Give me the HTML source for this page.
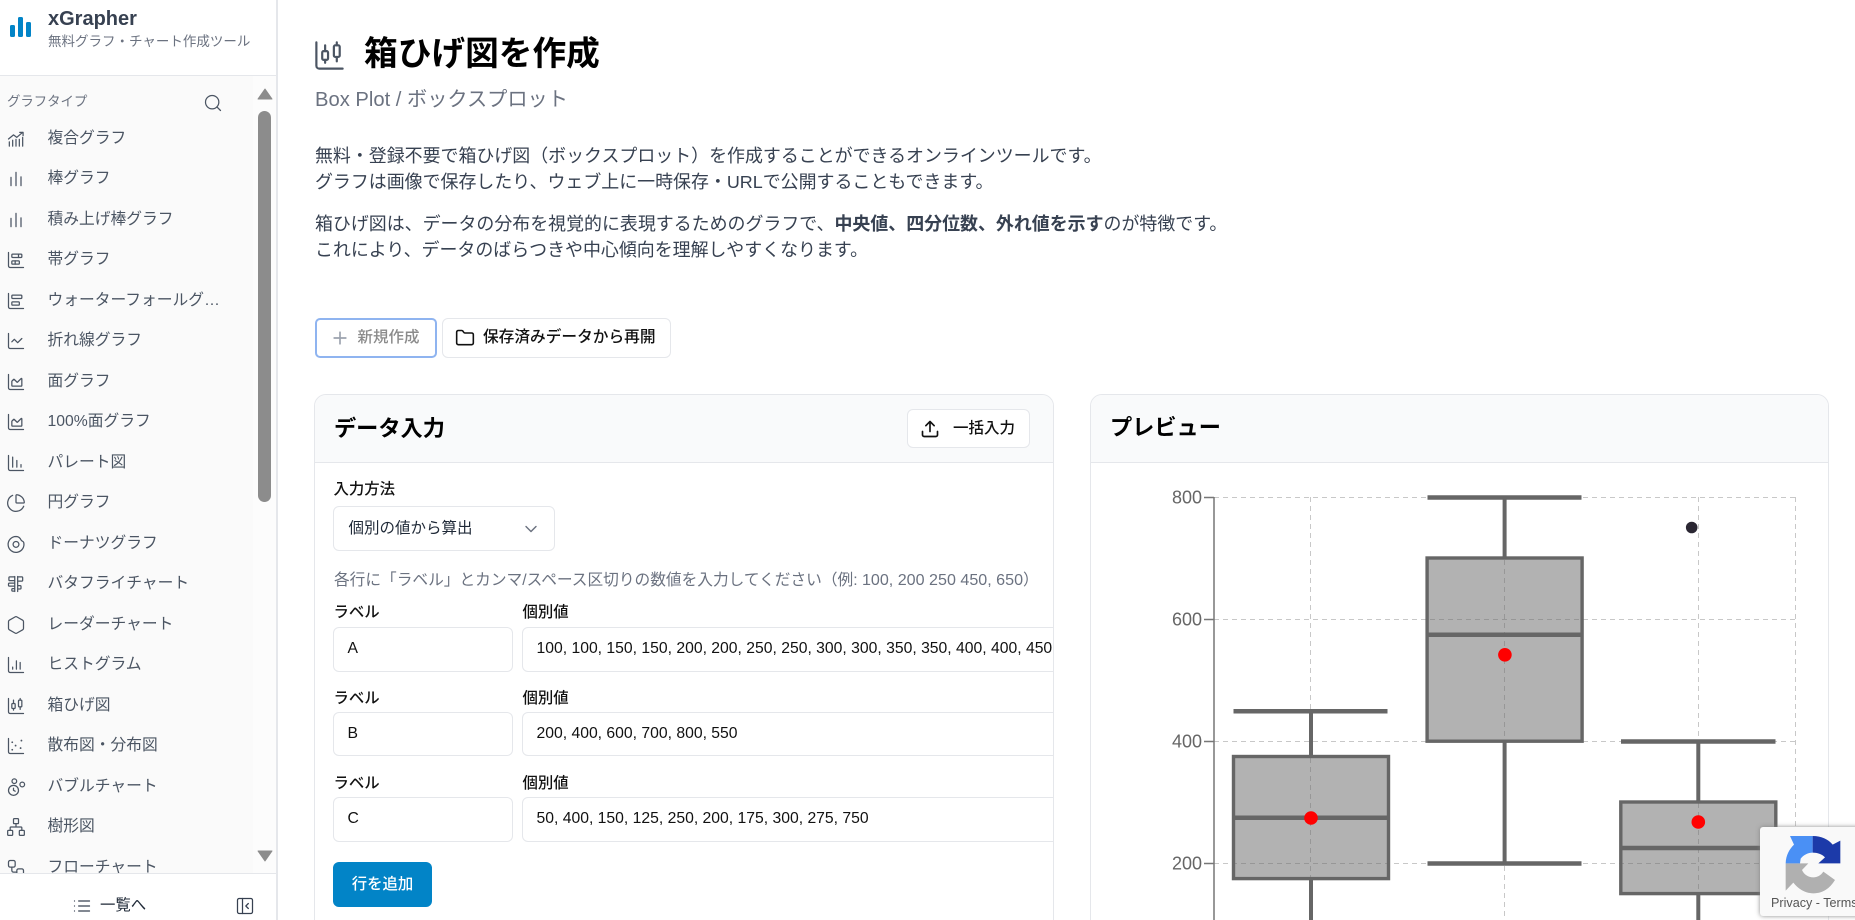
<!DOCTYPE html>
<html lang="ja"><head><meta charset="utf-8"><title>箱ひげ図を作成</title>
<style>
html,body{margin:0;padding:0;width:1855px;height:920px;overflow:hidden;background:#fff}
body{position:relative;font-family:"Liberation Sans","Noto Sans CJK JP",sans-serif;color:#111}
.a{position:absolute;box-sizing:border-box}
.t{position:absolute;white-space:nowrap;line-height:20px;height:20px}
svg{display:block;position:absolute;fill:none;stroke:currentColor;stroke-linecap:round;stroke-linejoin:round}
.side{left:0;top:0;width:278px;height:920px;background:#fafafa;border-right:2px solid #e5e7eb;overflow:hidden}
.list{position:absolute;left:0;top:116.75px;width:253px;height:757px;overflow:hidden}
.it{position:relative;height:40.5px;line-height:40.5px;font-size:15.75px;color:#4b5563;padding-left:47.5px;white-space:nowrap}
.it svg{left:6px;top:12px;color:#4b5563;stroke-width:1.5}
.it span{display:block;position:relative;top:2.2px;width:174px;overflow:hidden;text-overflow:ellipsis}
.card{border:1px solid #e5e7eb;border-radius:12px;overflow:hidden;background:#fff}
.ch{position:absolute;left:0;right:0;top:0;height:67px;background:#f9fafb;border-bottom:1px solid #e5e7eb}
.inp{position:absolute;background:#fff;border:1px solid #e5e7eb;border-radius:6px;box-sizing:border-box}
.lbl{font-size:15.4px;color:#111;font-weight:500}
.val{font-size:15.73px;color:#111}
p{margin:0}
</style></head><body>

<div class="a side">
  <div class="a" style="left:0;top:0;width:276px;height:76px;background:#fff;border-bottom:1px solid #e5e7eb"></div>
  <div class="a" style="left:10px;top:25px;width:4.7px;height:12px;background:#0284c7;border-radius:1.5px"></div>
  <div class="a" style="left:17.5px;top:17px;width:5px;height:20px;background:#0284c7;border-radius:1.5px"></div>
  <div class="a" style="left:26px;top:21.5px;width:4.7px;height:15.5px;background:#0284c7;border-radius:1.5px"></div>
  <div class="t" style="left:48px;top:9px;font-size:20px;font-weight:700;color:#374151">xGrapher</div>
  <div class="t" style="left:48px;top:32px;font-size:13.5px;color:#6b7280">無料グラフ・チャート作成ツール</div>
  <div class="t" style="left:7px;top:92px;font-size:13.4px;color:#6b7280">グラフタイプ</div>
  <svg style="left:202.5px;top:93px;color:#4b5563;stroke-width:1.5" width="20" height="20" viewBox="0 0 24 24"><path d="m21 21-4.3-4.3"/><circle cx="11" cy="11" r="8"/></svg>

  <div class="list">
    <div class="it"><svg width="20" height="20" viewBox="0 0 24 24"><path d="M4 20.500v-5M8 20.500v-7M12 20.500v-8M16 20.500v-8M20 20.500V10M3 12l6-5 4 3 7-6M16.500 4h4v4"/></svg><span>複合グラフ</span></div>
    <div class="it"><svg width="20" height="20" viewBox="0 0 24 24"><path d="M6 20V10M12 20V4M18 20V9.500"/></svg><span>棒グラフ</span></div>
    <div class="it"><svg width="20" height="20" viewBox="0 0 24 24"><path d="M6 20V10M12 20V4M18 20V9.500"/></svg><span>積み上げ棒グラフ</span></div>
    <div class="it"><svg width="20" height="20" viewBox="0 0 24 24"><path d="M11 13v4M15 5v4M3 3v16a2 2 0 0 0 2 2h16"/><rect x="7" y="13" width="9" height="4" rx="1"/><rect x="7" y="5" width="12" height="4" rx="1"/></svg><span>帯グラフ</span></div>
    <div class="it"><svg width="20" height="20" viewBox="0 0 24 24"><path d="M3 3v16a2 2 0 0 0 2 2h16"/><rect x="7" y="13" width="9" height="4" rx="1"/><rect x="7" y="5" width="12" height="4" rx="1"/></svg><span>ウォーターフォールグラフ</span></div>
    <div class="it"><svg width="20" height="20" viewBox="0 0 24 24"><path d="M3 3v16a2 2 0 0 0 2 2h16"/><path d="m19 9-5 5-4-4-3 3"/></svg><span>折れ線グラフ</span></div>
    <div class="it"><svg width="20" height="20" viewBox="0 0 24 24"><path d="M3 3v16a2 2 0 0 0 2 2h16"/><path d="M7 11.207a.5.5 0 0 1 .146-.353l2-2a.5.5 0 0 1 .708 0l3.292 3.292a.5.5 0 0 0 .708 0l4.292-4.292a.5.5 0 0 1 .854.353V16a1 1 0 0 1-1 1H8a1 1 0 0 1-1-1z"/></svg><span>面グラフ</span></div>
    <div class="it"><svg width="20" height="20" viewBox="0 0 24 24"><path d="M3 3v16a2 2 0 0 0 2 2h16"/><path d="M7 11.207a.5.5 0 0 1 .146-.353l2-2a.5.5 0 0 1 .708 0l3.292 3.292a.5.5 0 0 0 .708 0l4.292-4.292a.5.5 0 0 1 .854.353V16a1 1 0 0 1-1 1H8a1 1 0 0 1-1-1z"/></svg><span>100%面グラフ</span></div>
    <div class="it"><svg width="20" height="20" viewBox="0 0 24 24"><path d="M3 3v16a2 2 0 0 0 2 2h16M8 17V5M13 17V9M18 17v-3"/></svg><span>パレート図</span></div>
    <div class="it"><svg width="20" height="20" viewBox="0 0 24 24"><path d="M21 12c.552 0 1.005-.449.95-.998a10 10 0 0 0-8.953-8.951c-.55-.055-.998.398-.998.95v8a1 1 0 0 0 1 1z"/><path d="M21.21 15.89A10 10 0 1 1 8 2.83"/></svg><span>円グラフ</span></div>
    <div class="it"><svg width="20" height="20" viewBox="0 0 24 24"><path d="M12 3a9.500 9.500 0 1 0 9.200 7c-.4-1-1.300-1.200-2.200-1.800-.8-.5-1.200-1.200-1.800-2.500C16 4 14 3 12 3z"/><circle cx="12" cy="12.500" r="3.500"/></svg><span>ドーナツグラフ</span></div>
    <div class="it"><svg width="20" height="20" viewBox="0 0 24 24"><path d="M10 3.500H4.500a1 1 0 0 0-1 1v2.500a1 1 0 0 0 1 1H10M10 11H4a1 1 0 0 0-1 1v1.500a1 1 0 0 0 1 1h6M10 17.500H8a1 1 0 0 0-1 1v1a1 1 0 0 0 1 1h2M10.500 3v18M14 3.500h5a1 1 0 0 1 1 1v3a1 1 0 0 1-1 1h-5M14 3v18M14 14h3a1 1 0 0 1 1 1v2a1 1 0 0 1-1 1h-3"/></svg><span>バタフライチャート</span></div>
    <div class="it"><svg width="20" height="20" viewBox="0 0 24 24"><path d="M21 16V8a2 2 0 0 0-1-1.730l-7-4a2 2 0 0 0-2 0l-7 4A2 2 0 0 0 3 8v8a2 2 0 0 0 1 1.730l7 4a2 2 0 0 0 2 0l7-4A2 2 0 0 0 21 16z"/></svg><span>レーダーチャート</span></div>
    <div class="it"><svg width="20" height="20" viewBox="0 0 24 24"><path d="M3 3v16a2 2 0 0 0 2 2h16M8 17v-2.500M12.500 17V7M17 17V9"/></svg><span>ヒストグラム</span></div>
    <div class="it"><svg width="20" height="20" viewBox="0 0 24 24"><path d="M9 5v4"/><rect x="7" y="9" width="4" height="6" rx="1"/><path d="M9 15v2M17 3v2"/><rect x="15" y="5" width="4" height="8" rx="1"/><path d="M17 13v3M3 3v16a2 2 0 0 0 2 2h16"/></svg><span>箱ひげ図</span></div>
    <div class="it"><svg width="20" height="20" viewBox="0 0 24 24"><path d="M3 3v16a2 2 0 0 0 2 2h16"/><path d="M7.500 7.500h.01M18.500 5.500h.01M11.500 11.500h.01M7.500 16.500h.01M17.500 14.500h.01" stroke-width="2.200"/></svg><span>散布図・分布図</span></div>
    <div class="it"><svg width="20" height="20" viewBox="0 0 24 24"><circle cx="10" cy="5" r="2.800"/><circle cx="19.500" cy="9" r="2.800"/><circle cx="9" cy="16" r="6"/><path d="M9 13.500V16l2 1"/></svg><span>バブルチャート</span></div>
    <div class="it"><svg width="20" height="20" viewBox="0 0 24 24"><rect x="16" y="16" width="6" height="6" rx="1"/><rect x="2" y="16" width="6" height="6" rx="1"/><rect x="9" y="2" width="6" height="6" rx="1"/><path d="M5 16v-3a1 1 0 0 1 1-1h12a1 1 0 0 1 1 1v3M12 12V8"/></svg><span>樹形図</span></div>
    <div class="it"><svg width="20" height="20" viewBox="0 0 24 24"><rect x="3" y="3" width="8" height="8" rx="2"/><path d="M7 11v4a2 2 0 0 0 2 2h4"/><rect x="13" y="13" width="8" height="8" rx="2"/></svg><span>フローチャート</span></div>
  </div>

  <div class="a" style="left:253px;top:76px;width:23px;height:797px;background:#fcfcfc"></div>
  <div class="a" style="left:258px;top:111px;width:13px;height:391px;background:#8c8c8c;border-radius:7px"></div>
  <svg style="left:256.500px;top:88px;stroke:#8c8c8c;stroke-width:1;fill:#8c8c8c" width="16" height="12" viewBox="0 0 16 12"><path d="M8 1 15 11H1z"/></svg>
  <svg style="left:256.500px;top:850px;stroke:#8c8c8c;stroke-width:1;fill:#8c8c8c" width="16" height="12" viewBox="0 0 16 12"><path d="M1 1h14L8 11z"/></svg>

  <div class="a" style="left:0;top:873px;width:276px;height:47px;background:#fff;border-top:1px solid #e5e7eb"></div>
  <svg style="left:72px;top:896px;color:#374151;stroke-width:1.5" width="20" height="20" viewBox="0 0 24 24"><path d="M3 12h.01M3 18h.01M3 6h.01M8 12h13M8 18h13M8 6h13"/></svg>
  <div class="t" style="left:100px;top:896px;font-size:15.4px;color:#1f2937">一覧へ</div>
  <svg style="left:235px;top:896px;color:#374151;stroke-width:1.5" width="20" height="20" viewBox="0 0 24 24"><rect x="3" y="3" width="18" height="18" rx="2"/><path d="M9 3v18M16 15l-3-3 3-3"/></svg>
</div>

<svg style="left:312.3px;top:37.6px;color:#4b5563;stroke-width:1.5" width="35" height="35" viewBox="0 0 24 24"><path d="M9 5v4"/><rect x="7" y="9" width="4" height="6" rx="1"/><path d="M9 15v2M17 3v2"/><rect x="15" y="5" width="4" height="8" rx="1"/><path d="M17 13v3M3 3v16a2 2 0 0 0 2 2h16"/></svg>
<div class="t" style="left:364px;top:34px;height:40px;line-height:40px;font-size:33.7px;font-weight:700;color:#000">箱ひげ図を作成</div>
<div class="t" style="left:315px;top:89px;height:22px;line-height:22px;font-size:20.2px;color:#6b7280">Box Plot / ボックスプロット</div>

<div class="a" style="left:315px;top:142.5px;font-size:17.95px;line-height:26.6px;color:#374151;white-space:nowrap">
  <p>無料・登録不要で箱ひげ図（ボックスプロット）を作成することができるオンラインツールです。<br>グラフは画像で保存したり、ウェブ上に一時保存・URLで公開することもできます。</p>
  <p style="margin-top:15px">箱ひげ図は、データの分布を視覚的に表現するためのグラフで、<b>中央値、四分位数、外れ値を示す</b>のが特徴です。<br>これにより、データのばらつきや中心傾向を理解しやすくなります。</p>
</div>

<div class="a" style="left:315px;top:318px;width:122px;height:40px;border:2px solid #8fb4f0;border-radius:5px;background:#fff"></div>
<svg style="left:330px;top:327.500px;color:#9ca3af;stroke-width:2" width="20" height="20" viewBox="0 0 24 24"><path d="M5 12h14M12 5v14"/></svg>
<div class="t" style="left:357.500px;top:328px;font-size:15.5px;color:#8b8b8b;font-weight:500">新規作成</div>
<div class="a" style="left:442px;top:318px;width:229px;height:40px;border:1px solid #e5e7eb;border-radius:6px;background:#fff"></div>
<svg style="left:455px;top:327.500px;color:#111;stroke-width:1.900" width="20" height="20" viewBox="0 0 24 24"><path d="M20 20a2 2 0 0 0 2-2V8a2 2 0 0 0-2-2h-7.900a2 2 0 0 1-1.690-.9L9.600 3.900A2 2 0 0 0 7.930 3H4a2 2 0 0 0-2 2v13a2 2 0 0 0 2 2Z"/></svg>
<div class="t" style="left:483px;top:328px;font-size:15.7px;color:#111;font-weight:500">保存済みデータから再開</div>

<!-- left card -->
<div class="a card" style="left:314px;top:394px;width:740px;height:560px">
  <div class="ch"></div>
  <div class="t" style="left:19px;top:22px;height:24px;line-height:24px;font-size:22.2px;font-weight:700;color:#000">データ入力</div>
  <div class="a" style="left:592px;top:14px;width:123px;height:39px;background:#fff;border:1px solid #e5e7eb;border-radius:6px"></div>
  <svg style="left:605px;top:24px;color:#111;stroke-width:2" width="20" height="20" viewBox="0 0 24 24"><path d="M21 15v4a2 2 0 0 1-2 2H5a2 2 0 0 1-2-2v-4M17 8l-5-5-5 5M12 3v12"/></svg>
  <div class="t" style="left:638px;top:24px;font-size:15.5px;color:#111;font-weight:500">一括入力</div>

  <div class="t lbl" style="left:18.500px;top:85px">入力方法</div>
  <div class="inp" style="left:18px;top:111px;width:222px;height:45px"></div>
  <div class="t" style="left:33.500px;top:124px;font-size:15.5px;color:#1f2937">個別の値から算出</div>
  <svg style="left:206px;top:124px;color:#6b7280;stroke-width:1.700" width="20" height="20" viewBox="0 0 24 24"><path d="m6 9 6 6 6-6"/></svg>

  <div class="t" style="left:19px;top:175px;font-size:15.7px;color:#6b7280">各行に「ラベル」とカンマ/スペース区切りの数値を入力してください（例: <span style="font-size:16.1px">100, 200 250 450, 650</span>）</div>

  <div class="t lbl" style="left:18.500px;top:208px">ラベル</div>
  <div class="t lbl" style="left:207.500px;top:208px">個別値</div>
  <div class="inp" style="left:18px;top:232px;width:180px;height:45px"></div>
  <div class="inp" style="left:207px;top:232px;width:700px;height:45px"></div>
  <div class="t val" style="left:32.500px;top:244px">A</div>
  <div class="t val" style="left:221.500px;top:244px;width:517px;overflow:hidden">100, 100, 150, 150, 200, 200, 250, 250, 300, 300, 350, 350, 400, 400, 450</div>

  <div class="t lbl" style="left:18.500px;top:294px">ラベル</div>
  <div class="t lbl" style="left:207.500px;top:294px">個別値</div>
  <div class="inp" style="left:18px;top:317px;width:180px;height:44px"></div>
  <div class="inp" style="left:207px;top:317px;width:700px;height:44px"></div>
  <div class="t val" style="left:32.500px;top:329px">B</div>
  <div class="t val" style="left:221.500px;top:329px">200, 400, 600, 700, 800, 550</div>

  <div class="t lbl" style="left:18.500px;top:379px">ラベル</div>
  <div class="t lbl" style="left:207.500px;top:379px">個別値</div>
  <div class="inp" style="left:18px;top:402px;width:180px;height:45px"></div>
  <div class="inp" style="left:207px;top:402px;width:700px;height:45px"></div>
  <div class="t val" style="left:32.500px;top:414px">C</div>
  <div class="t val" style="left:221.500px;top:414px">50, 400, 150, 125, 250, 200, 175, 300, 275, 750</div>

  <div class="a" style="left:18px;top:467px;width:99px;height:45px;background:#0284c7;border-radius:6px;color:#fff;font-size:15.4px;font-weight:500;text-align:center;line-height:46px">行を追加</div>
</div>

<!-- right card -->
<div class="a card" style="left:1090px;top:394px;width:739px;height:560px">
  <div class="ch"></div>
  <div class="t" style="left:19px;top:21px;height:24px;line-height:24px;font-size:22.2px;font-weight:700;color:#000">プレビュー</div>
</div>

<svg style="left:0;top:0;stroke-linecap:butt;stroke-linejoin:miter" width="1855" height="920" viewBox="0 0 1855 920">
  <g stroke="#c8c8c8" stroke-width="1" stroke-dasharray="5 4">
    <path d="M1214 497.500H1795M1214 619.500H1795M1214 741.500H1795M1214 863.500H1795"/>
    <path d="M1310.500 497V920M1504.500 497V920M1698.500 497V920M1795.500 497V920"/>
  </g>
  <g stroke="#777" stroke-width="1.500">
    <path d="M1214 497V920M1204 497.500H1214M1204 619.500H1214M1204 741.500H1214M1204 863.500H1214"/>
  </g>
  <g font-family="Liberation Sans" font-size="18" fill="#666" stroke="none" text-anchor="end">
    <text x="1202" y="503.500">800</text><text x="1202" y="625.500">600</text><text x="1202" y="747.500">400</text><text x="1202" y="869.500">200</text>
  </g>
  <!-- A -->
  <g stroke="#666">
    <rect x="1233.500" y="756.500" width="155" height="122.100" fill="rgba(102,102,102,.5)" stroke-width="3.400"/>
    <path d="M1311 755V711.500M1311 878V925" stroke-width="4" fill="none"/>
    <path d="M1233.500 711.300H1387.500M1233.500 817.700H1388.500" stroke-width="4.500" fill="none"/>
  </g>
  <!-- B -->
  <g stroke="#666">
    <rect x="1427.100" y="558" width="155" height="183.200" fill="rgba(102,102,102,.5)" stroke-width="3.400"/>
    <path d="M1504.600 557V497M1504.600 741V863" stroke-width="4" fill="none"/>
    <path d="M1427.500 497.500H1581.500M1427.500 863.500H1581.500M1427.100 634.800H1582.100" stroke-width="4.500" fill="none"/>
  </g>
  <!-- C -->
  <g stroke="#666">
    <rect x="1620.800" y="802" width="155" height="91.600" fill="rgba(102,102,102,.5)" stroke-width="3.400"/>
    <path d="M1698.300 802V741M1698.300 893V925" stroke-width="4" fill="none"/>
    <path d="M1621 741.500H1775.500M1620.800 848H1775.800" stroke-width="4.500" fill="none"/>
  </g>
  <circle cx="1311" cy="818" r="6.800" fill="#f00" stroke="none"/>
  <circle cx="1504.900" cy="654.800" r="6.800" fill="#f00" stroke="none"/>
  <circle cx="1698.300" cy="822" r="6.800" fill="#f00" stroke="none"/>
  <circle cx="1691.700" cy="527.500" r="5.800" fill="#2b2733" stroke="none"/>
</svg>

<!-- recaptcha -->
<div class="a" style="left:1760px;top:827px;width:256px;height:89px;background:#f9f9f9;border-radius:3px;box-shadow:0 0 5px rgba(128,128,128,.9)"></div>
<svg style="left:1780px;top:830px;stroke:none" width="66" height="66" viewBox="0 0 198 198">
  <path fill="#b0b0b0" d="M17 100V182L40 158C55 178 78 190 100 190 128 190 150 175 165 150L130 125C122 137 112 142 100 142 85 142 72 134 66 120L85 100Z"/>
  <path fill="#4a90f5" d="M17 100C18 75 28 58 42 44L30 18H98V68C85 68 70 75 62 86L60 100Z"/>
  <path fill="#1c3aa9" d="M98 18C125 18 145 28 158 44L181 32V100H115L135 82C125 72 112 68 98 68Z"/>
</svg>
<div class="t" style="left:1771px;top:893px;font-size:12.600px;color:#555">Privacy - Terms</div>

</body></html>
